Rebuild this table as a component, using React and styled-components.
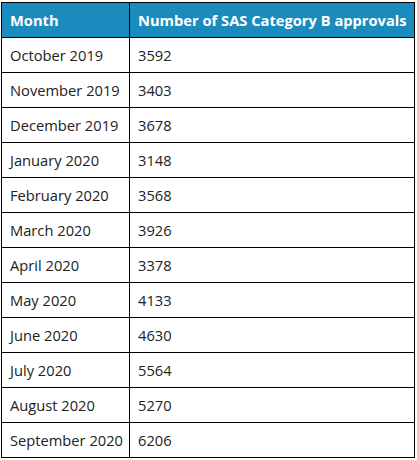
import React from "react";
import styled, { createGlobalStyle } from "styled-components";

const rows = [
    ["October 2019", "3592"],
    ["November 2019", "3403"],
    ["December 2019", "3678"],
    ["January 2020", "3148"],
    ["February 2020", "3568"],
    ["March 2020", "3926"],
    ["April 2020", "3378"],
    ["May 2020", "4133"],
    ["June 2020", "4630"],
    ["July 2020", "5564"],
    ["August 2020", "5270"],
    ["September 2020", "6206"],
];

const GlobalStyle = createGlobalStyle`
    body {
        margin: 0;
        background: #fff;
        font-family: "Open Sans", "Liberation Sans", sans-serif;
    }
`;

const Wrap = styled.div`
    padding: 2px 0 0 1px;
`;

const Table = styled.table`
    border-collapse: collapse;
    table-layout: fixed;
    width: 414px;
    font-size: 14.7px;
    color: #222;
`;

const HeadCell = styled.th`
    background: #1a8bbd;
    color: #fff;
    font-weight: 700;
    text-align: left;
    height: 35px;
    padding: 0 4px 0 8px;
    border: 1px solid #000;
    box-sizing: border-box;
    white-space: nowrap;
    overflow: hidden;
    width: ${(p) => p.$w || "auto"};
`;

const Cell = styled.td`
    height: 35px;
    padding: 0 4px 0 8px;
    border: 1px solid #000;
    box-sizing: border-box;
    white-space: nowrap;
    overflow: hidden;
`;

const App = () => {
    return (
        <>
            <GlobalStyle />
            <Wrap>
                <Table>
                    <thead>
                        <tr>
                            <HeadCell $w="128px">Month</HeadCell>
                            <HeadCell>Number of SAS Category B approvals</HeadCell>
                        </tr>
                    </thead>
                    <tbody>
                        {rows.map(([month, count]) => (
                            <tr key={month}>
                                <Cell>{month}</Cell>
                                <Cell>{count}</Cell>
                            </tr>
                        ))}
                    </tbody>
                </Table>
            </Wrap>
        </>
    );
};

export default App;
